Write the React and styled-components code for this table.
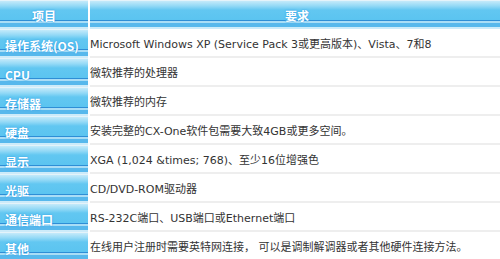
import React from 'react'
import styled, { createGlobalStyle } from 'styled-components'

const GlobalStyle = createGlobalStyle`
  html, body {
    margin: 0;
    padding: 0;
    background: #fff;
  }
`

const rows = [
  ['操作系统(OS)', 'Microsoft Windows XP (Service Pack 3或更高版本)、Vista、7和8'],
  ['CPU', '微软推荐的处理器'],
  ['存储器', '微软推荐的内存'],
  ['硬盘', '安装完整的CX-One软件包需要大致4GB或更多空间。'],
  ['显示', 'XGA (1,024 &times; 768)、至少16位增强色'],
  ['光驱', 'CD/DVD-ROM驱动器'],
  ['通信端口', 'RS-232C端口、USB端口或Ethernet端口'],
  ['其他', '在线用户注册时需要英特网连接， 可以是调制解调器或者其他硬件连接方法。'],
]

const barGradient = `linear-gradient(
  to bottom,
  #e4f3fa 0px, #e4f3fa 1px,
  #c4eafa 1px, #93d9f6 6px, #62c7f1 10px, #5bc4f0 20px,
  #2e8ed6 20px, #2e8ed6 21px,
  #a9ddf6 21px, #a9ddf6 23px,
  #57b8ec 23px, #57b8ec 27px,
  #cdebf9 27px, #cdebf9 29px
)`

const Table = styled.div`
  width: 500px;
  display: grid;
  grid-template-columns: 88px 1fr;
  column-gap: 2px;
  font-family: "DejaVu Sans", Verdana, "Noto Sans CJK SC", sans-serif;
`

const HeadCell = styled.div`
  height: 29px;
  background: ${barGradient};
  color: #fff;
  font-weight: bold;
  font-size: 12px;
  font-family: "Noto Sans CJK SC", sans-serif;
  display: flex;
  align-items: center;
  justify-content: center;
  padding: 1px 0 0 ${p => p.$shift || 0}px;
  box-sizing: border-box;
  text-shadow: 0 0 2px #3aa4e6, 0 0 1px #3aa4e6;
`

const Label = styled.div`
  height: 29px;
  background: ${barGradient};
  color: #fff;
  font-weight: bold;
  font-size: 12px;
  font-family: "Noto Sans CJK SC", sans-serif;
  display: flex;
  align-items: center;
  padding: 4px 0 0 5px;
  box-sizing: border-box;
  white-space: nowrap;
  text-shadow: 0 0 2px #3aa4e6, 0 0 1px #3aa4e6;
`

const Value = styled.div`
  height: 29px;
  box-sizing: border-box;
  border-bottom: 2px solid #eeeeee;
  color: #333;
  font-size: 11px;
  font-family: "DejaVu Sans", "Noto Sans CJK SC", sans-serif;
  display: flex;
  align-items: center;
  padding-top: 1px;
  white-space: nowrap;
  overflow: hidden;
`

const App = () => (
  <>
    <GlobalStyle />
    <Table>
      <HeadCell>项目</HeadCell>
      <HeadCell $shift={4}>要求</HeadCell>
      {rows.map(([label, value]) => (
        <React.Fragment key={label}>
          <Label>{label}</Label>
          <Value>{value}</Value>
        </React.Fragment>
      ))}
    </Table>
  </>
)

export default App
